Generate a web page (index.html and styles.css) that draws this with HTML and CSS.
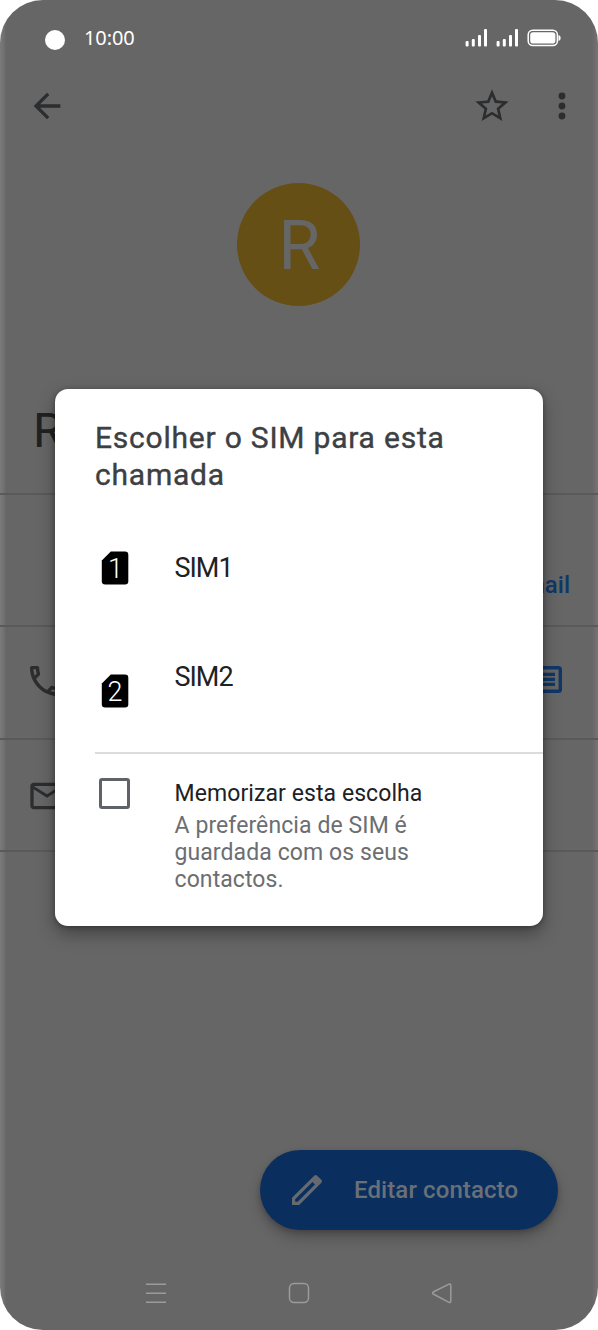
FILE: index.html
```html
<!DOCTYPE html>
<html lang="pt">
<head>
<meta charset="utf-8">
<title>Contacto</title>
<link rel="stylesheet" href="styles.css">
</head>
<body>
<div class="phone">
  <header class="status">
    <span class="camera"></span>
    <span class="clock">10:00</span>
    <svg class="indicators" width="96" height="20" viewBox="0 0 96 20" fill="#fff">
      <rect x=".6" y="12" width="3" height="5.4" rx="1"/><rect x="6.8" y="10" width="3" height="7.4" rx="1"/><rect x="13" y="6" width="3" height="11.4" rx="1"/><rect x="19" y="0" width="3" height="17.4" rx="1"/>
      <rect x="31.6" y="12" width="3" height="5.4" rx="1"/><rect x="37.8" y="10" width="3" height="7.4" rx="1"/><rect x="44" y="6" width="3" height="11.4" rx="1"/><rect x="50" y="0" width="3" height="17.4" rx="1"/>
      <rect x="63.2" y="1.2" width="29.2" height="15.4" rx="4.5" fill="none" stroke="#fff" stroke-width="1.5"/>
      <rect x="65.2" y="3.2" width="25.2" height="11.4" rx="2.8"/><path d="M93.5 6q2.2.5 2.2 3t-2.2 3z"/>
    </svg>
  </header>
  <nav class="toolbar">
    <svg class="icon" viewBox="0 0 24 24"><path d="M20 11H7.83l5.59-5.59L12 4l-8 8 8 8 1.41-1.41L7.83 13H20v-2z"/></svg>
    <svg class="icon star" viewBox="0 0 24 24"><path d="M22 9.24l-7.19-.62L12 2 9.19 8.63 2 9.24l5.46 4.73L5.82 21 12 17.27 18.18 21l-1.63-7.03L22 9.24zM12 15.4l-3.76 2.27 1-4.28-3.32-2.88 4.38-.38L12 6.1l1.71 4.04 4.38.38-3.32 2.88 1 4.28L12 15.4z"/></svg>
    <svg class="icon" viewBox="0 0 24 24"><circle cx="12" cy="6" r="2.05"/><circle cx="12" cy="12" r="2.05"/><circle cx="12" cy="18" r="2.05"/></svg>
  </nav>
  <section class="hero"><div class="avatar">R</div></section>
  <h1 class="name">R</h1>
  <section class="actions"><span>Email</span></section>
  <section class="row">
    <svg class="icon" viewBox="0 0 24 24"><path d="M6.54 5c.06.89.21 1.76.45 2.59l-1.2 1.2c-.41-1.2-.67-2.47-.76-3.79h1.51m9.86 12.02c.85.24 1.72.39 2.6.45v1.49c-1.32-.09-2.59-.35-3.8-.75l1.2-1.19M7.5 3H4c-.55 0-1 .45-1 1 0 9.39 7.61 17 17 17 .55 0 1-.45 1-1v-3.49c0-.55-.45-1-1-1-1.24 0-2.45-.2-3.57-.57-.1-.04-.21-.05-.31-.05-.26 0-.51.1-.71.29l-2.2 2.2c-2.83-1.45-5.15-3.76-6.59-6.59l2.2-2.2c.28-.28.36-.67.25-1.02C8.7 6.45 8.5 5.25 8.5 4c0-.55-.45-1-1-1z"/></svg>
    <svg class="message" width="34" height="27" viewBox="0 0 34 27"><rect x="1.7" y="1.7" width="30.6" height="23.6" rx="1.8" fill="none" stroke="currentColor" stroke-width="3.4"/><path d="M7 8.3h20M7 13.3h20M7 18.3h20" stroke="currentColor" stroke-width="3.2"/></svg>
  </section>
  <section class="row mail">
    <svg class="icon" viewBox="0 0 24 24"><path d="M22 6c0-1.1-.9-2-2-2H4c-1.1 0-2 .9-2 2v12c0 1.1.9 2 2 2h16c1.1 0 2-.9 2-2V6zm-2 0l-8 5-8-5h16zm0 12H4V8l8 5 8-5v10z"/></svg>
  </section>
  <div class="fab-area">
    <button class="fab">
      <svg class="icon" viewBox="0 0 24 24"><path fill-rule="evenodd" d="M3 16.7V21h4.3L20.6 7.7q.9-.9 0-1.8L18.1 3.4q-.9-.9-1.8 0zM4.9 17.6 15.3 7.2l1.5 1.5L6.4 19.1H4.9z"/></svg>
      <span>Editar contacto</span>
    </button>
  </div>
  <footer class="system-nav">
    <svg width="22" height="22" viewBox="0 0 22 22"><path d="M1 2.3h20M1 11.3h20M1 20.3h20"/></svg>
    <svg width="22" height="22" viewBox="0 0 22 22"><rect x="1.5" y="1.5" width="19" height="19" rx="4.5"/></svg>
    <svg width="22" height="22" viewBox="0 0 22 22"><path d="M18 2.2 2.2 10q-1.4 1 0 2L18 20.3q1.8.6 1.8-1V3.2q0-1.6-1.8-1z"/></svg>
  </footer>

  <main class="dialog">
    <h2 class="title">Escolher o SIM para esta<br>chamada</h2>
    <div class="option first">
      <svg width="28" height="34" viewBox="0 0 28 34"><path d="M9.8.5H24q3.3 0 3.3 3.3v26.4q0 3.3-3.3 3.3H4.2q-3.4 0-3.4-3.3V9.5z"/><text x="14" y="26.8">1</text></svg>
      <span>SIM1</span>
    </div>
    <div class="option second">
      <svg width="28" height="34" viewBox="0 0 28 34"><path d="M9.8.5H24q3.3 0 3.3 3.3v26.4q0 3.3-3.3 3.3H4.2q-3.4 0-3.4-3.3V9.5z"/><text x="13.5" y="26.8">2</text></svg>
      <span>SIM2</span>
    </div>
    <label class="remember">
      <span class="box"></span>
      <span class="copy"><span class="primary">Memorizar esta escolha</span><span class="secondary">A preferência de SIM é<br>guardada com os seus<br>contactos.</span></span>
    </label>
  </main>
</div>
</body>
</html>
```
FILE: styles.css
```css
* { box-sizing: border-box; }
body { margin: 0; background: #fff; font-family: Roboto, sans-serif; }
.phone {
  position: relative; display: flex; flex-direction: column;
  width: 598px; height: 1330px; overflow: hidden; border-radius: 43px;
  color: #2c2d2e;
  background: linear-gradient(90deg, #7b7b7b 0, #707070 4px, #666 6px, #666 592px, #6d6d6f 595px, #747476 598px);
}
.icon { width: 40px; height: 40px; fill: currentColor; flex: none; }
.status { height: 76px; padding: 0 37px 0 45px; display: flex; align-items: center; color: #fff; }
.camera { width: 20px; height: 20px; border-radius: 50%; background: #fff; margin-top: 3px; }
.clock { font: 20px/24px "Noto Sans", sans-serif; letter-spacing: -.1px; margin-left: 19px; }
.indicators { margin-left: auto; margin-top: 1px; }
.toolbar { height: 60px; padding: 0 16.5px 0 26.5px; display: flex; align-items: center; }
.star { margin: 0 30px 0 auto; }
.hero { height: 265px; padding: 47px 1px 0 0; display: flex; justify-content: center; }
.avatar { width: 123px; height: 123px; border-radius: 50%; background: #654f15; color: #666; font: 68px/127px Roboto, sans-serif; text-align: center; padding-left: 2px; }
.name { height: 94px; margin: 0; padding: 6px 33px; border-bottom: 2px solid #5a5a5a; font: 400 48px/48px Roboto, sans-serif; color: #202122; }
.actions { height: 132px; border-bottom: 2px solid #5a5a5a; padding: 76px 28px 0; text-align: right; color: #113768; font: 500 24px/28px Roboto, sans-serif; }
.row { height: 113px; border-bottom: 2px solid #5a5a5a; padding: 34px 36px 0 25px; display: flex; justify-content: space-between; }
.message { color: #113768; margin-top: 5px; }
.mail { height: 112px; padding-left: 26.5px; padding-top: 35.5px; }
.fab-area { flex: 1; display: flex; align-items: flex-end; justify-content: flex-end; padding: 0 40px 27px; }
.fab { width: 298px; height: 80px; border: 0; border-radius: 40px; background: #0a2f5e; color: #6a7078; display: flex; align-items: center; padding: 0 0 0 27px; gap: 27px; box-shadow: 0 8px 13px rgba(0,0,0,.22), 0 2px 5px rgba(0,0,0,.2); font: 500 24px/28px Roboto, sans-serif; letter-spacing: .1px; white-space: nowrap; }
.fab .icon { color: #66696e; }
.system-nav { height: 73px; padding: 25px 145px 0; display: flex; justify-content: space-between; fill: none; stroke: #9b9b9b; stroke-width: 1.5; }
.dialog { position: absolute; left: 55px; top: 389px; width: 488px; height: 537px; background: #fff; border-radius: 13px; box-shadow: 0 8px 18px rgba(0,0,0,.35), 0 1px 5px rgba(0,0,0,.3); padding: 30px 0 0 40px; color: #202124; }
.title { margin: 0; color: #3c4043; font: 400 30px/37px Roboto, sans-serif; letter-spacing: .78px; -webkit-text-stroke: .4px #3c4043; white-space: nowrap; }
.option { display: flex; padding-left: 5.5px; font-size: 27px; line-height: 32px; letter-spacing: -1px; }
.option span { margin-left: 46px; }
.option text { fill: #fff; font: 300 27px Roboto, sans-serif; text-anchor: middle; }
.first { height: 109px; padding-top: 58px; }
.first span { margin-top: 1px; }
.second { height: 152px; padding-top: 58px; border-bottom: 2px solid #dadce0; }
.second svg { margin-top: 14px; }
.second span { margin-top: 1px; }
.remember { display: flex; padding: 24px 0 0 4px; }
.box { width: 31px; height: 31px; border: 3px solid #5f6368; border-radius: 3px; }
.copy { margin: 2px 0 0 44.5px; display: flex; flex-direction: column; font-size: 23px; line-height: 27px; white-space: nowrap; }
.primary { letter-spacing: .08px; margin-bottom: 5px; }
.secondary { color: #6b6e72; letter-spacing: .09px; }
```
